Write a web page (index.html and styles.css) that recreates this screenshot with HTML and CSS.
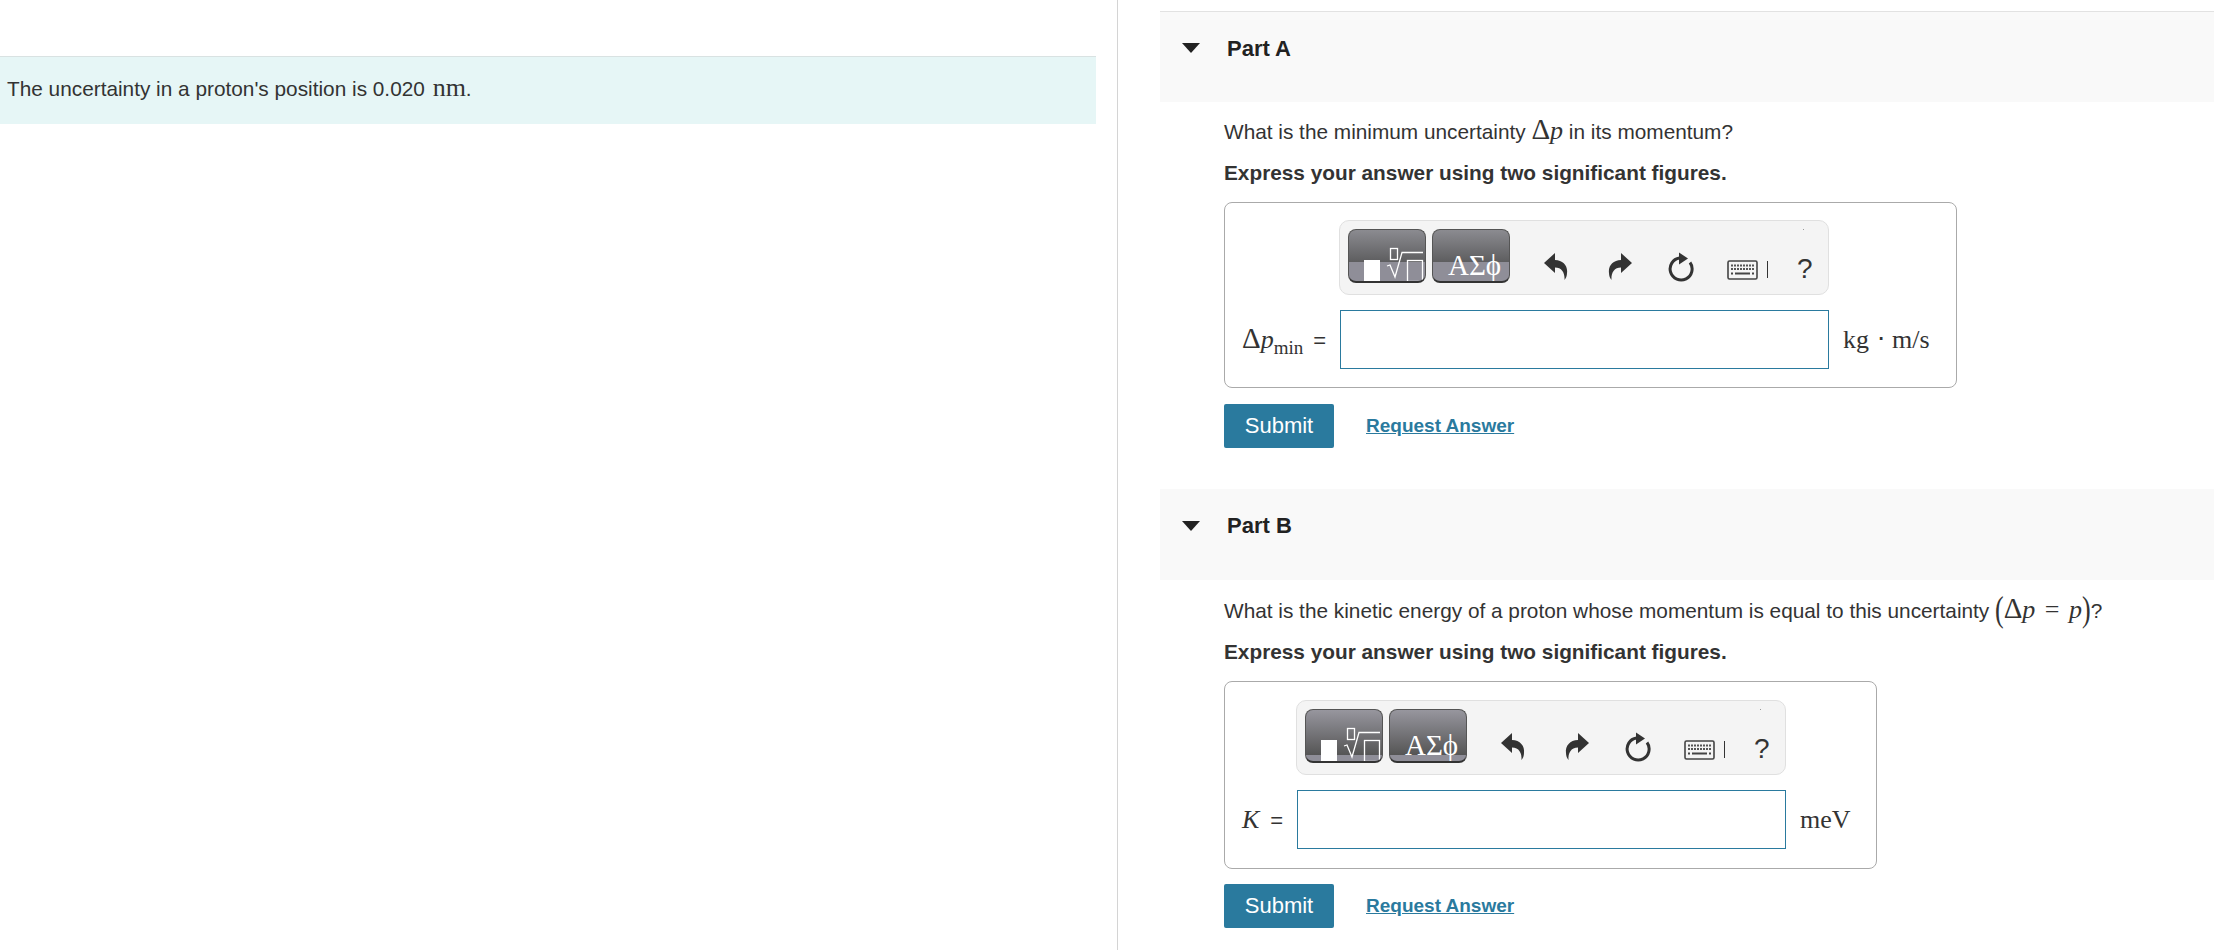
FILE: index.html
```html
<!DOCTYPE html>
<html lang="en">
<head>
    <meta charset="UTF-8">
    <meta name="viewport" content="width=device-width, initial-scale=1.0">
    <title>Uncertainty in a proton's position</title>
    <link rel="stylesheet" href="styles.css">
</head>
<body>

    <svg class="defs" width="0" height="0">
        <symbol id="i-undo" viewBox="0 0 24 27">
            <path d="M0 10 L11 0 V7 C19 7 24 13 23 20 C23 23 22 25 20.500 27 C21 20 18 14.500 11 14.500 V20 Z"/>
        </symbol>
        <symbol id="i-reload" viewBox="0 0 26 30">
            <path class="ring" d="M22 10.500 A11 11 0 1 1 11.500 6.100"/>
            <path d="M11 0.500 L20 6.500 L11 12.500 Z"/>
        </symbol>
        <symbol id="i-keys" viewBox="0 0 31 20">
            <rect class="key-frame" x="1" y="1" width="29" height="18" rx="1.500"/>
            <path class="key-row" d="M4 5.500 H27 M4 9 H27"/>
            <path class="key-space" d="M4 13.500 H6 M8 13.500 H23 M25 13.500 H27"/>
        </symbol>
        <symbol id="i-template" viewBox="0 0 78 54">
            <rect class="tpl-fill" x="16" y="31" width="16" height="23"/>
            <rect class="tpl-line" x="42.500" y="19.500" width="7" height="11"/>
            <path class="tpl-line" d="M39 37 L42 36 L47 48 L54 23.500 H75"/>
            <rect class="tpl-line" x="59.500" y="31.500" width="15" height="21"/>
        </symbol>
    </svg>

    <main class="page">
        <section class="intro">
            <p class="intro-text">The uncertainty in a proton's position is 0.020 <span class="math">nm</span>.</p>
        </section>

        <section class="parts">
            <div class="part part-a">
                <div class="part-head">
                    <span class="caret"></span>
                    <h2>Part A</h2>
                </div>
                <div class="part-body">
                    <p class="question">What is the minimum uncertainty <span class="math big"><span class="delta">Δ</span><i>p</i></span> in its momentum?</p>
                    <p class="hint">Express your answer using two significant figures.</p>

                    <div class="answer-box">
                        <div class="toolbar">
                            <button class="tool-btn" type="button"><svg width="78" height="54"><use href="#i-template"/></svg></button>
                            <button class="tool-btn greek" type="button">ΑΣϕ</button>
                            <svg class="icon undo" width="24" height="27"><use href="#i-undo"/></svg>
                            <svg class="icon redo" width="24" height="27"><use href="#i-undo"/></svg>
                            <svg class="icon reload" width="26" height="30"><use href="#i-reload"/></svg>
                            <svg class="icon keys" width="31" height="20"><use href="#i-keys"/></svg>
                            <span class="cursor-bar"></span>
                            <span class="help">?</span>
                            <span class="speck"></span>
                        </div>
                        <label class="answer-label math"><span><span class="delta">Δ</span><i>p</i><sub>min</sub></span><span class="eq">=</span></label>
                        <input class="answer-input" type="text">
                        <span class="unit math">kg ⋅ m/s</span>
                    </div>

                    <div class="actions">
                        <button class="submit" type="button">Submit</button>
                        <a class="request" href="#">Request Answer</a>
                    </div>
                </div>
            </div>

            <div class="part part-b">
                <div class="part-head">
                    <span class="caret"></span>
                    <h2>Part B</h2>
                </div>
                <div class="part-body">
                    <p class="question">What is the kinetic energy of a proton whose momentum is equal to this uncertainty <span class="math big"><span class="paren">(</span><span class="delta">Δ</span><i>p</i> = <i>p</i><span class="paren">)</span></span>?</p>
                    <p class="hint">Express your answer using two significant figures.</p>

                    <div class="answer-box">
                        <div class="toolbar">
                            <button class="tool-btn low" type="button"><svg width="78" height="54"><use href="#i-template"/></svg></button>
                            <button class="tool-btn low greek" type="button">ΑΣϕ</button>
                            <svg class="icon undo" width="24" height="27"><use href="#i-undo"/></svg>
                            <svg class="icon redo" width="24" height="27"><use href="#i-undo"/></svg>
                            <svg class="icon reload" width="26" height="30"><use href="#i-reload"/></svg>
                            <svg class="icon keys" width="31" height="20"><use href="#i-keys"/></svg>
                            <span class="cursor-bar"></span>
                            <span class="help">?</span>
                            <span class="speck"></span>
                        </div>
                        <label class="answer-label math"><span><i>K</i></span><span class="eq">=</span></label>
                        <input class="answer-input" type="text">
                        <span class="unit math">meV</span>
                    </div>

                    <div class="actions">
                        <button class="submit" type="button">Submit</button>
                        <a class="request" href="#">Request Answer</a>
                    </div>
                </div>
            </div>
        </section>
    </main>

</body>
</html>
```

FILE: styles.css
```css
html, body {
    margin: 0;
    padding: 0;
    background: white;
}

body {
    font-family: "Liberation Sans", Arial, sans-serif;
    color: #333;
    font-size: 20.800px;
    height: 950px;
    overflow: hidden;
}

p, h2 {
    margin: 0;
}

.defs {
    position: absolute;
}

.page {
    display: flex;
    height: 950px;
}

.intro {
    width: 1118px;
    box-sizing: border-box;
    border-right: 1px solid #d4d4d4;
    padding: 56px 21px 0 0;
}

.intro-text {
    background: #e6f6f6;
    border-top: 1px solid #d9e2e2;
    height: 67px;
    line-height: 62px;
    padding-left: 7px;
}

.math {
    font-family: "Liberation Serif", "Times New Roman", serif;
}

.intro-text .math {
    font-size: 26px;
    margin-left: 2px;
}

.math.big {
    font-size: 26px;
}

.part-b .math.big {
    word-spacing: 3px;
}

.delta {
    font-size: 29px;
    line-height: 20px;
}

.paren {
    display: inline-block;
    font-size: 26px;
    line-height: 20px;
    transform: scaleY(1.4);
}

.parts {
    flex: 1;
    padding: 11px 0 0 42px;
}

.part-head {
    display: flex;
    align-items: flex-start;
    background: #f9f9f9;
    height: 91px;
    box-sizing: border-box;
}

.part-a .part-head {
    border-top: 1px solid #e2e2e2;
}

.caret {
    width: 0;
    height: 0;
    margin: 31px 0 0 22px;
    border-left: 9px solid transparent;
    border-right: 9px solid transparent;
    border-top: 10px solid #222;
}

.part-b .caret {
    margin-top: 32px;
}

.part-head h2 {
    font-size: 22px;
    line-height: 24px;
    margin: 25px 0 0 27px;
    color: #222;
}

.part-body {
    padding-left: 64px;
}

.question {
    margin-top: 14px;
    line-height: 30px;
    white-space: nowrap;
}

.hint {
    margin-top: 11px;
    font-weight: bold;
    line-height: 30px;
}

.answer-box {
    display: inline-grid;
    grid-template-columns: auto 489px auto;
    column-gap: 14px;
    row-gap: 15px;
    align-items: center;
    margin-top: 14px;
    padding: 17px 26px 18px 17px;
    border: 1px solid #aaa;
    border-radius: 8px;
    vertical-align: top;
}

.toolbar {
    grid-column: 2 / 4;
    position: relative;
    display: flex;
    align-items: flex-start;
    width: 490px;
    height: 75px;
    margin-left: -1px;
    box-sizing: border-box;
    padding: 8px 0 0 8px;
    background: #f4f4f4;
    border: 1px solid #e0e0e0;
    border-radius: 10px;
}

.tool-btn {
    width: 78px;
    height: 54px;
    padding: 0;
    margin-right: 6px;
    border: 1px solid #555;
    border-bottom: 2px solid #333;
    border-radius: 8px;
    overflow: hidden;
    background: linear-gradient(#8b8b90 0%, #5e5e60 62%, #8f8e98 63%, #8f8e98 100%);
    color: white;
}

.tool-btn.low {
    background: linear-gradient(#97969e 0%, #555 88%, #8f8e98 89%, #8f8e98 100%);
}

.tool-btn svg {
    display: block;
    margin: -1px 0 0 -1px;
}

.greek {
    font-family: "Liberation Serif", serif;
    font-size: 29px;
    line-height: 24px;
    padding-top: 18px;
    padding-left: 7px;
}

.tpl-fill {
    fill: white;
}

.tpl-line {
    fill: none;
    stroke: white;
    stroke-width: 1.300;
}

.icon {
    fill: #333;
    flex: none;
}

.undo {
    margin: 24px 0 0 28px;
}

.redo {
    margin: 24px 0 0 40px;
    transform: scaleX(-1);
}

.reload {
    margin: 23px 0 0 36px;
}

.ring {
    fill: none;
    stroke: #333;
    stroke-width: 3;
}

.keys {
    margin: 31px 0 0 33px;
}

.key-frame {
    fill: #f4f4f4;
    stroke: #444;
    stroke-width: 1.600;
}

.key-row {
    fill: none;
    stroke: #555;
    stroke-width: 2;
    stroke-dasharray: 2 1;
}

.key-space {
    fill: none;
    stroke: #444;
    stroke-width: 2;
}

.cursor-bar {
    width: 1px;
    height: 17px;
    margin: 32px 0 0 9px;
    background: #333;
}

.help {
    font-size: 28px;
    line-height: 32px;
    margin: 24px 0 0 29px;
    color: #333;
}

.speck {
    position: absolute;
    top: 8px;
    right: 24px;
    width: 1px;
    height: 1px;
    background: #999;
}

.answer-label {
    grid-column: 1;
    display: flex;
    justify-content: space-between;
    align-items: baseline;
    font-size: 26px;
    white-space: nowrap;
}

.part-a .answer-label {
    width: 84px;
}

.part-b .answer-label {
    width: 41px;
}

.answer-label sub {
    font-size: 19px;
    line-height: 0;
}

.eq {
    font-family: "Liberation Sans", sans-serif;
    font-size: 22px;
}

.answer-input {
    grid-column: 2;
    width: 489px;
    height: 59px;
    box-sizing: border-box;
    margin: 0;
    border: 1px solid #2a7a9e;
    background: white;
    padding: 0;
}

.unit {
    grid-column: 3;
    font-size: 26px;
    white-space: nowrap;
}

.part-a .unit {
    word-spacing: 1px;
}

.actions {
    display: flex;
    align-items: center;
    margin-top: 16px;
}

.part-b .actions {
    margin-top: 15px;
}

.submit {
    width: 110px;
    height: 44px;
    padding: 0;
    background: #2a7a9e;
    color: white;
    border: none;
    border-radius: 2px;
    font-family: "Liberation Sans", Arial, sans-serif;
    font-size: 22px;
}

.request {
    margin-left: 32px;
    font-size: 19px;
    font-weight: bold;
    color: #2a7a9e;
}

.part-a .part-body {
    padding-bottom: 41px;
}

.part-b .question {
    line-height: 31px;
}

.part-b .answer-box {
    padding: 18px 25px 19px 17px;
}
```
